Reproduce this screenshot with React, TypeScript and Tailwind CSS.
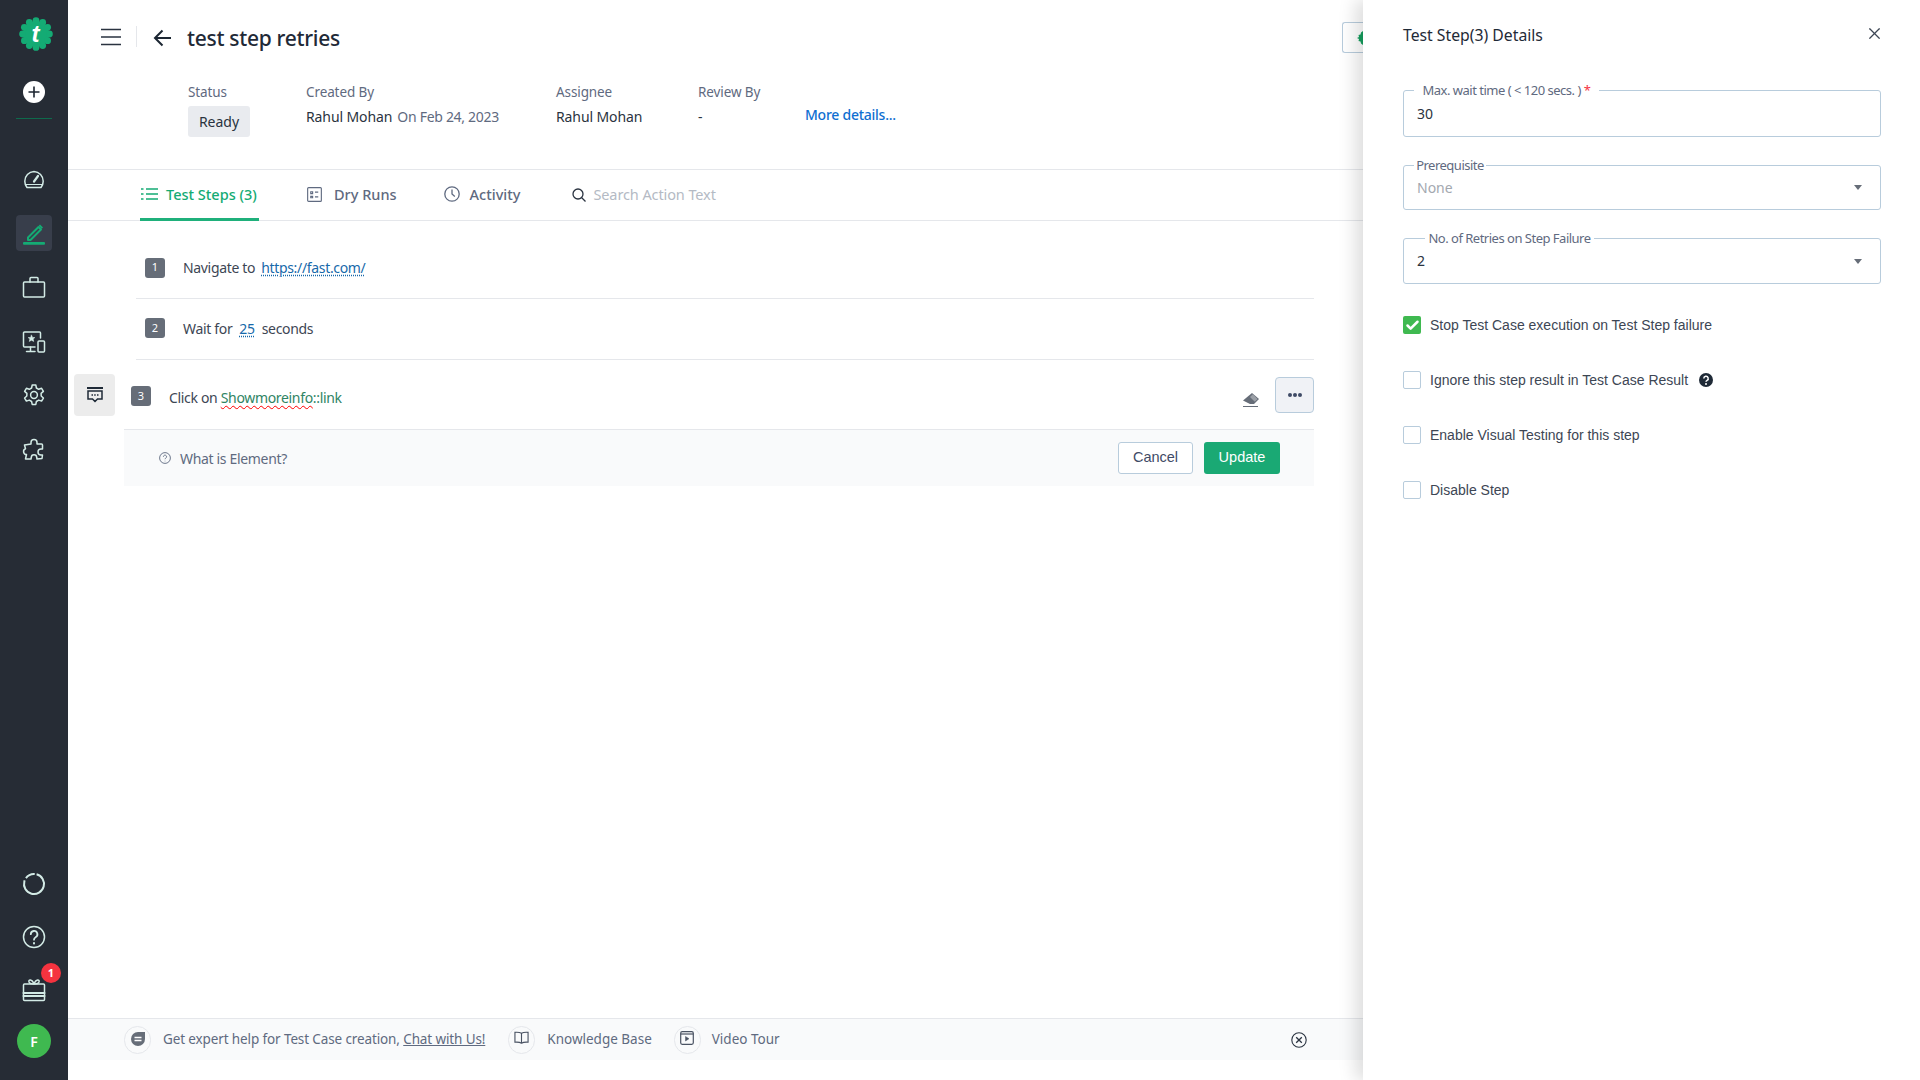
import { Check, X } from "lucide-react";
import type { ReactNode } from "react";

const SANS = "font-['Noto_Sans',sans-serif]";

function RailIcon({ children, className }: { children: ReactNode; className?: string }) {
  return (
    <svg viewBox="0 0 24 24" fill="none" stroke="#d3ebe6" strokeWidth="1.5" strokeLinecap="round" strokeLinejoin="round" className={className ?? "h-[24px] w-[24px]"}>
      {children}
    </svg>
  );
}

function Logo() {
  const lobes = Array.from({ length: 12 }, (_, i) => (i * Math.PI) / 6);
  return (
    <div className="relative ml-[3px] h-[34px] w-[34px]">
      <svg viewBox="0 0 34 34" className="h-full w-full">
        <circle cx="17" cy="17" r="13" fill="#14ab74" />
        {lobes.map((a, i) => (
          <circle key={i} cx={17 + 13.4 * Math.cos(a)} cy={17 + 13.4 * Math.sin(a)} r="3.4" fill="#14ab74" />
        ))}
      </svg>
      <span className="absolute inset-0 flex items-center justify-center font-['Liberation_Sans',sans-serif] text-[24px] font-bold italic leading-none text-white">t</span>
    </div>
  );
}

function Sidebar() {
  return (
    <aside className="flex h-full w-[68px] shrink-0 flex-col items-center bg-[#262c35] pb-[22px] pt-[17px]">
      <Logo />
      <svg viewBox="0 0 22 22" className="mt-[30px] h-[22px] w-[22px]">
        <circle cx="11" cy="11" r="11" fill="#fff" />
        <path d="M11 5.5v11M5.5 11h11" stroke="#1c2530" strokeWidth="1.6" />
      </svg>
      <div className="mt-[15px] h-px w-[36px] bg-[#0e6a4c]" />
      <div className="mt-[48px] flex flex-col items-center">
        <RailIcon>
          <path d="M5 20.5h14c1.4-1.8 2.2-4 2.2-6.3A9.6 9.6 0 0 0 12 4.5a9.6 9.6 0 0 0-9.2 9.7c0 2.3.8 4.5 2.2 6.3Z" />
          <path d="m16 9-4 5.5" strokeWidth="2.2" />
          <path d="M3.5 17.5h17" strokeWidth="1" />
        </RailIcon>
        <div className="mt-[24px] flex h-[36px] w-[36px] items-center justify-center rounded-[4px] bg-[#383e4b]">
          <svg viewBox="0 0 24 24" className="h-[24px] w-[24px]">
            <path d="M6 16.5 16.5 6l2.5 2.5L8.500 19H6Z" fill="none" stroke="#14ab74" strokeWidth="2" strokeLinejoin="round" />
            <path d="m18 3.5 3 3-1.3 1.3-3-3Z" fill="#14ab74" />
            <rect x="1" y="21" width="22" height="2.8" rx="1" fill="#14ab74" />
          </svg>
        </div>
        <RailIcon className="mt-[24px] h-[24px] w-[24px]">
          <rect x="1.5" y="7" width="21" height="15" rx="1" />
          <path d="M8 7V3.5A1 1 0 0 1 9 2.5h6a1 1 0 0 1 1 1V7" />
        </RailIcon>
        <RailIcon className="mt-[31px] h-[24px] w-[24px]">
          <path d="M13 17H2.5a1 1 0 0 1-1-1V3a1 1 0 0 1 1-1h15a1 1 0 0 1 1 1v5" />
          <path d="M8.5 17v4M4.5 21.5h8.5" />
          <rect x="16" y="11" width="6.5" height="11" rx="1" />
          <path d="m9.5 5.2 1 2.2 2.3.2-1.7 1.5.6 2.3-2.2-1.2-2.2 1.2.6-2.3-1.7-1.5 2.3-.2Z" fill="#d3ebe6" strokeWidth=".6" />
        </RailIcon>
        <RailIcon className="mt-[29px] h-[24px] w-[24px]">
          <path d="M10.2 2h3.6l.6 3 2.3 1.3 2.9-1 1.8 3.1-2.3 2 .1 2.6 2.2 2-1.8 3.1-2.9-1-2.3 1.4-.6 2.9h-3.6l-.6-2.9-2.3-1.4-2.9 1-1.8-3.1 2.2-2 .1-2.6-2.3-2 1.8-3.1 2.9 1 2.3-1.3Z" />
          <circle cx="12" cy="12" r="3.4" />
        </RailIcon>
        <RailIcon className="mt-[30px] h-[24px] w-[24px]">
          <path d="M9 5.5a3 3 0 0 1 6 0V7h4.5a1 1 0 0 1 1 1v4h-1.5a3 3 0 0 0 0 6h1.5l-.5 3.5-5 .5-.3-1.500a2.700 2.700 0 0 0-5.400 0L9 22H3.500l1-4.500a3 3 0 0 1-1-5.800L2.500 8l6.500-1Z" />
        </RailIcon>
      </div>
      <div className="mt-auto flex flex-col items-center">
        <svg viewBox="0 0 24 24" className="mt-[1px] h-[24px] w-[24px] -rotate-[75deg]" fill="none" stroke="#d3ebe6" strokeWidth="2">
          <circle cx="12" cy="12" r="10" strokeDasharray="48 2.500 10 2.300" />
        </svg>
        <RailIcon className="mt-[29px] h-[24px] w-[24px]">
          <circle cx="12" cy="12" r="10.5" />
          <path d="M8.800 9.200a3.300 3.300 0 1 1 4.800 3c-1.100.6-1.600 1.200-1.600 2.500" strokeWidth="1.800" />
          <path d="M12 18v.4" strokeWidth="2" />
        </RailIcon>
        <div className="relative mt-[29px]">
          <RailIcon className="h-[24px] w-[24px]">
            <rect x="1.5" y="6" width="21" height="16.5" rx="1" />
            <path d="M1.500 15h21M1.500 18h21" strokeWidth="2" />
            <path d="M12 6C10 .5 6 1.500 7 4c.5 1.500 3 2 5 2ZM12 6c2-5.500 6-4.500 5-2-.5 1.500-3 2-5 2Z" />
          </RailIcon>
          <span className={`absolute left-[19px] top-[-15px] flex h-[20px] w-[20px] items-center justify-center rounded-full bg-[#f5333f] text-[11px] font-bold text-white ${SANS}`}>1</span>
        </div>
        <div className={`mt-[22px] flex h-[34px] w-[34px] items-center justify-center rounded-full bg-[#3fb950] text-[14px] font-semibold text-white ${SANS}`}>F</div>
      </div>
    </aside>
  );
}

function MetaColumn({ label, width, children }: { label: string; width: string; children: ReactNode }) {
  return (
    <div className={width}>
      <div className="text-[13.5px] leading-[20px] tracking-[-0.1px] text-[#5f6a80]">{label}</div>
      {children}
    </div>
  );
}

function Header() {
  return (
    <header className="h-[170px] shrink-0 border-b border-[#e5e7eb]">
      <div className="flex h-[82px] items-start pl-[33px] pt-[26px]">
        <svg viewBox="0 0 20 18" className="mt-[2px] h-[18px] w-[20px]" fill="none" stroke="#2a3340" strokeWidth="1.6">
          <path d="M0 1.5h20M0 9h20M0 16.5h20" />
        </svg>
        <div className="ml-[15px] h-[21px] w-px bg-[#e5e7eb]" />
        <svg viewBox="0 0 18 18" className="ml-[16px] mt-[3px] h-[18px] w-[18px]" fill="none" stroke="#1c2733" strokeWidth="2">
          <path d="M18 9H2M9.5 1.5 2 9l7.5 7.5" />
        </svg>
        <h1 className="ml-[16px] text-[21px] font-medium leading-[24px] tracking-[-0.3px] text-[#1f2a37]">test step retries</h1>
        <div className="ml-auto mt-[-4px] flex h-[31px] w-[21px] items-center justify-end overflow-hidden rounded-l-[3px] border border-r-0 border-[#b8ccdc]">
          <svg viewBox="0 0 6 14" className="h-[14px] w-[6px]">
            <path d="M6 0v14L4 12.500 3.500 10.500 1.500 10l.500-2L0 7l2-1-.500-2 2-.5L4 1.500Z" fill="#16a05f" />
          </svg>
        </div>
      </div>
      <div className="flex pl-[120px]">
        <MetaColumn label="Status" width="w-[118px]">
          <div className="mt-[4px] flex h-[31px] w-[62px] items-center justify-center rounded-[3px] bg-[#e9ebef] text-[14px] text-[#2a3340]">Ready</div>
        </MetaColumn>
        <MetaColumn label="Created By" width="w-[250px]">
          <div className="mt-[5px] text-[14px] leading-[20px] tracking-[-0.1px]">
            <span className="text-[#2a3340]">Rahul Mohan</span>
            <span className="ml-[5px] tracking-[-0.3px] text-[#5f6a80]">On Feb 24, 2023</span>
          </div>
        </MetaColumn>
        <MetaColumn label="Assignee" width="w-[142px]">
          <div className="mt-[5px] text-[14px] leading-[20px] tracking-[-0.1px] text-[#2a3340]">Rahul Mohan</div>
        </MetaColumn>
        <MetaColumn label="Review By" width="w-[107px]">
          <div className="mt-[5px] text-[14px] leading-[20px] text-[#2a3340]">-</div>
        </MetaColumn>
        <div className="mt-[23px] text-[14px] font-medium leading-[20px] tracking-[-0.25px] text-[#0f6fd1]">More details...</div>
      </div>
    </header>
  );
}

function Tabs() {
  return (
    <nav className="flex h-[51px] shrink-0 items-stretch border-b border-[#e5e7eb] pl-[72px] text-[14.5px] font-medium text-[#5f6a80]">
      <div className="-mb-px flex w-[119px] items-center gap-[8px] border-b-[3px] border-[#1fb07b] pl-px pt-[2px] text-[#14ab74]">
        <svg viewBox="0 0 17 14" className="mt-[-2px] h-[14px] w-[17px]" fill="none" stroke="#14ab74" strokeWidth="1.6">
          <path d="M5 2h12M5 7h12M5 12h12M0 2h2.500M0 7h2.500M0 12h2.500" />
        </svg>
        Test Steps (3)
      </div>
      <div className="ml-[48px] flex items-center gap-[12px]">
        <svg viewBox="0 0 16 16" className="mt-[-2px] h-[15px] w-[15px]" fill="none" stroke="#5f6a80" strokeWidth="1.2">
          <rect x=".7" y=".7" width="14.6" height="14.6" rx="1" />
          <path d="M4 5h2v2H4zM4 10h2v1.500H4zM8.500 5.500H12M8.500 10.500H12" />
        </svg>
        Dry Runs
      </div>
      <div className="ml-[47px] flex items-center gap-[10px]">
        <svg viewBox="0 0 16 16" className="mt-[-2px] h-[16px] w-[16px]" fill="none" stroke="#5f6a80" strokeWidth="1.3">
          <circle cx="8" cy="8" r="7.2" />
          <path d="M8 3.500V8l2.800 2.600" />
        </svg>
        Activity
      </div>
      <div className="ml-[52px] flex items-center gap-[7px] font-normal tracking-[-0.1px] text-[#b4bac4]">
        <svg viewBox="0 0 14 14" className="h-[14px] w-[14px]" fill="none" stroke="#2a3340" strokeWidth="1.3">
          <circle cx="6" cy="6" r="5" />
          <path d="m9.500 9.500 4 4" />
        </svg>
        Search Action Text
      </div>
    </nav>
  );
}

function StepBadge({ n }: { n: number }) {
  return (
    <span className="flex h-[20px] w-[20px] shrink-0 items-center justify-center rounded-[3px] bg-[#666d78] text-[11px] tracking-normal text-white">{n}</span>
  );
}

function Steps() {
  return (
    <div className="text-[14px] tracking-[-0.33px] text-[#3d4654]">
      <div className="ml-[68px] mt-[16px] flex h-[62px] w-[1178px] items-center gap-[18px] border-b border-[#e5e7eb] pl-[9px]">
        <StepBadge n={1} />
        <span>
          Navigate to
          <span className="ml-[6px] text-[#1769aa] underline decoration-dotted underline-offset-2">https://fast.com/</span>
        </span>
      </div>
      <div className="ml-[68px] flex h-[61px] w-[1178px] items-center gap-[18px] border-b border-[#e5e7eb] pb-[2px] pl-[9px]">
        <StepBadge n={2} />
        <span>
          Wait for
          <span className="mx-[7px] text-[#1769aa] underline decoration-dotted underline-offset-2">25</span>
          seconds
        </span>
      </div>
      <div className="ml-[6px] flex h-[69px] w-[1240px] items-center">
        <div className="flex h-[42px] w-[41px] items-center justify-center rounded-[4px] bg-[#ececec]">
          <svg viewBox="0 0 16 16" className="h-[16px] w-[16px]" fill="none" stroke="#1f2a37" strokeWidth="1.5">
            <path d="M0 1h16" strokeWidth="2" />
            <path d="M1 4h14v8h-4.500L8 14.500 5.500 12H1Z" />
            <path d="M4.500 8h1.500M7.200 8h1.500M10 8h1.500" strokeWidth="1.7" />
          </svg>
        </div>
        <div className="ml-[16px] mt-[3px]"><StepBadge n={3} /></div>
        <span className="ml-[18px] mt-[5px]">
          Click on{" "}
          <span className="text-[#2f8464]">
            <span className="underline decoration-[#f00] decoration-wavy decoration-1 underline-offset-2">Showmoreinfo</span>::link
          </span>
        </span>
        <svg viewBox="0 0 16 14" className="ml-auto mt-[10px] h-[14px] w-[16px]" fill="#666d78">
          <path d="M9 0 16 6l-5 5H7L0 7.500Z" />
          <path d="M9.800 1.200 14.600 6l-2.800 2.800L7 4Z" fill="#fff" fillOpacity=".35" />
          <path d="M0 13h15v1H0Z" />
        </svg>
        <button className="ml-[16px] flex h-[36px] w-[39px] items-center justify-center rounded-[4px] border border-[#b8ccdc] bg-[#f0f2f6]">
          <svg viewBox="0 0 14 4" className="h-[4px] w-[14px]" fill="#3f4b66">
            <circle cx="2" cy="2" r="2" />
            <circle cx="7" cy="2" r="2" />
            <circle cx="12" cy="2" r="2" />
          </svg>
        </button>
      </div>
      <div className="ml-[56px] flex h-[57px] w-[1190px] items-center border-t border-[#e5e7eb] bg-[#f9fafb] pl-[35px] pr-[34px]">
        <svg viewBox="0 0 12 12" className="h-[12px] w-[12px]" fill="none" stroke="#5f6a80" strokeWidth=".9">
          <circle cx="6" cy="6" r="5.400" />
          <path d="M4.400 4.700a1.600 1.600 0 1 1 2.400 1.400c-.5.300-.8.600-.8 1.100M6 8.800v.5" />
        </svg>
        <span className="ml-[9px] text-[#5f6a80]">What is Element?</span>
        <button className="ml-auto h-[32px] w-[75px] rounded-[3px] border border-[#b8ccdc] bg-white font-['Liberation_Sans',sans-serif] text-[14.5px] tracking-normal text-[#3f4b66]">Cancel</button>
        <button className="ml-[11px] h-[32px] w-[76px] rounded-[3px] bg-[#1aa974] font-['Liberation_Sans',sans-serif] text-[14.5px] tracking-normal text-white">Update</button>
      </div>
    </div>
  );
}

function HelpIcon({ children }: { children: ReactNode }) {
  return (
    <span className="flex h-[28px] w-[27px] items-center justify-center rounded-full border border-[#e5e7eb]">{children}</span>
  );
}

function HelpBar() {
  return (
    <div className="mb-[20px] mt-auto flex h-[42px] shrink-0 items-center border-t border-[#e5e7eb] bg-[#f9fafb] pl-[56px] pr-[56px] text-[13.5px] text-[#5f6a80]">
      <HelpIcon>
        <svg viewBox="0 0 16 16" className="mt-[-2px] h-[16px] w-[16px]">
          <path d="M8 1h7v7a7 7 0 1 1-7-7Z" fill="#666d78" />
          <path d="M4.500 6.500h7M4.500 9.500h7" stroke="#fff" strokeWidth="1.3" />
        </svg>
      </HelpIcon>
      <span className="ml-[12px] tracking-[-0.12px]">
        Get expert help for Test Case creation, <span className="underline">Chat with Us!</span>
      </span>
      <span className="ml-[23px]">
        <HelpIcon>
          <svg viewBox="0 0 16 14" className="mt-[-3px] h-[14px] w-[15px]" fill="none" stroke="#4a5363" strokeWidth="1.2">
            <path d="M8 2C6 .8 3.500.8 1 1v10.500c2.500-.2 5-.2 7 1 2-1.200 4.500-1.200 7-1V1C12.500.8 10 .8 8 2Zm0 0v10.500" />
          </svg>
        </HelpIcon>
      </span>
      <span className="ml-[12px]">Knowledge Base</span>
      <span className="ml-[22px]">
        <HelpIcon>
          <svg viewBox="0 0 14 14" className="mt-[-3px] h-[14px] w-[14px]" fill="none" stroke="#4a5363" strokeWidth="1.2">
            <rect x=".7" y=".7" width="12.600" height="12.600" rx="1.500" />
            <path d="M.7 3h12.600" />
            <path d="M5.500 5.500v4.500L9 7.700Z" fill="#4a5363" strokeWidth=".5" />
          </svg>
        </HelpIcon>
      </span>
      <span className="ml-[11px]">Video Tour</span>
      <svg viewBox="0 0 16 16" className="ml-auto h-[16px] w-[16px]" fill="none" stroke="#2a3340" strokeWidth="1.1">
        <circle cx="8" cy="8" r="7.200" />
        <path d="m5.200 5.200 5.600 5.600M10.800 5.200l-5.600 5.600" strokeWidth="1.3" />
      </svg>
    </div>
  );
}

function FieldBox({ label, gapWidth, gapLeft, height, children, required }: { label: string; gapWidth: string; gapLeft: string; height: string; children: ReactNode; required?: boolean }) {
  return (
    <div className={`relative flex items-center rounded-[3px] border border-[#b8ccdc] pl-[13px] pr-[18px] text-[14px] ${height}`}>
      <span className={`absolute top-[-10px] h-[18px] whitespace-nowrap bg-white text-center text-[13px] leading-[18px] tracking-[-0.5px] text-[#5f6a80] ${gapWidth} ${gapLeft}`}>
        {label}
        {required ? <span className="ml-[3px] text-[#f5333f]">*</span> : null}
      </span>
      {children}
    </div>
  );
}

function CheckRow({ label, checked, extra }: { label: string; checked?: boolean; extra?: ReactNode }) {
  return (
    <div className="flex h-[18px] items-center font-['Liberation_Sans',sans-serif] text-[14px] text-[#3d4654]">
      {checked ? (
        <span className="flex h-[18px] w-[18px] items-center justify-center rounded-[2px] bg-[#3fb950]">
          <Check size={15} strokeWidth={4} color="#fff" />
        </span>
      ) : (
        <span className="h-[18px] w-[18px] rounded-[2px] border border-[#b8ccdc]" />
      )}
      <span className="ml-[9px]">{label}</span>
      {extra}
    </div>
  );
}

function Caret() {
  return <span className="ml-auto h-0 w-0 border-x-[4px] border-t-[5px] border-x-transparent border-t-[#666d78]" />;
}

function Drawer() {
  return (
    <section className="relative z-10 h-full w-[557px] shrink-0 bg-white pl-[40px] pr-[39px] shadow-[-8px_0_16px_rgba(0,0,0,0.13)]">
      <div className="flex h-[90px] items-start justify-between pt-[25px]">
        <h2 className="text-[15.75px] leading-[20px] text-[#1f2a37]">Test Step(3) Details</h2>
        <X size={19} strokeWidth={1.5} color="#3d4654" className="mr-[-3px] mt-[-1px]" />
      </div>
      <FieldBox label="Max. wait time ( < 120 secs. )" required gapWidth="w-[185px]" gapLeft="left-[10px]" height="h-[47px]">
        <span className="text-[#2a3340]">30</span>
      </FieldBox>
      <div className="mt-[28px]">
        <FieldBox label="Prerequisite" gapWidth="w-[72px]" gapLeft="left-[10px]" height="h-[45px]">
          <span className="mt-[-1px] text-[#a3a8b0]">None</span>
          <Caret />
        </FieldBox>
      </div>
      <div className="mt-[28px]">
        <FieldBox label="No. of Retries on Step Failure" gapWidth="w-[169px]" gapLeft="left-[21px]" height="h-[46px]">
          <span className="mt-[-1px] text-[#2a3340]">2</span>
          <Caret />
        </FieldBox>
      </div>
      <div className="mt-[32px] flex flex-col gap-[37px]">
        <CheckRow label="Stop Test Case execution on Test Step failure" checked />
        <CheckRow
          label="Ignore this step result in Test Case Result"
          extra={
            <svg viewBox="0 0 14 14" className="ml-[11px] h-[14px] w-[14px]">
              <circle cx="7" cy="7" r="7" fill="#1f2a37" />
              <path d="M4.800 5.400a2.200 2.200 0 1 1 3.300 1.900c-.7.400-1.100.7-1.100 1.500" fill="none" stroke="#fff" strokeWidth="1.5" />
              <circle cx="7" cy="11" r="1" fill="#fff" />
            </svg>
          }
        />
        <CheckRow label="Enable Visual Testing for this step" />
        <CheckRow label="Disable Step" />
      </div>
    </section>
  );
}

export default function App() {
  return (
    <div className={`flex h-screen w-full overflow-hidden bg-white ${SANS}`}>
      <Sidebar />
      <main className="flex h-full min-w-0 flex-1 flex-col">
        <Header />
        <Tabs />
        <Steps />
        <HelpBar />
      </main>
      <Drawer />
    </div>
  );
}
